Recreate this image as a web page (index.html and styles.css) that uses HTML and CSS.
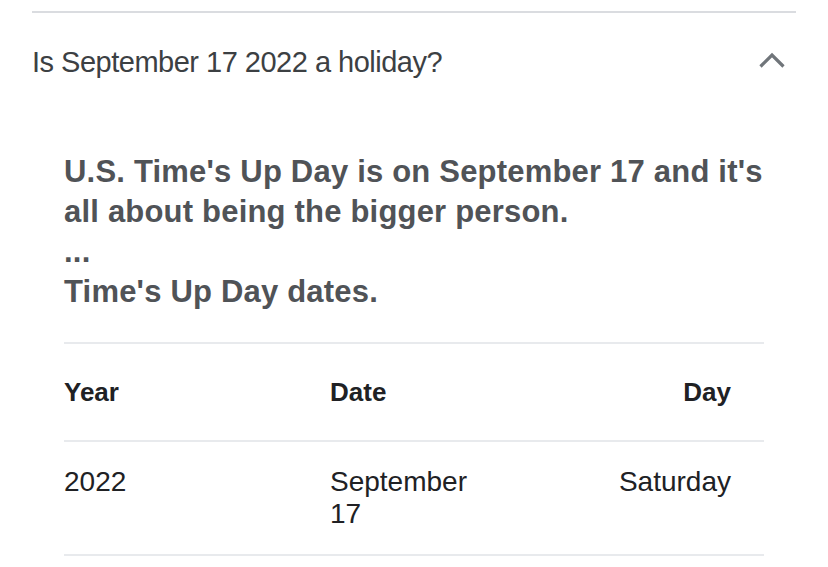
FILE: index.html
```html
<!DOCTYPE html>
<html lang="en">
<head>
<meta charset="utf-8">
<title>Is September 17 2022 a holiday?</title>
<link rel="stylesheet" href="styles.css">
</head>
<body>
<div class="faq">
  <div class="question-row">
    <div class="question">Is September 17 2022 a holiday?</div>
    <svg class="chevron" width="26" height="16" viewBox="0 0 26 16" aria-hidden="true">
      <path d="M1.5 14.5 L13 3 L24.5 14.5" fill="none" stroke="#70757a" stroke-width="3.2"/>
    </svg>
  </div>
  <div class="answer">
    <div class="snippet">U.S. Time's Up Day is on September 17 and it's all about being the bigger person.<br>...<br>Time's Up Day dates.</div>
    <div class="table">
      <div class="row head">
        <div class="cell">Year</div>
        <div class="cell">Date</div>
        <div class="cell right">Day</div>
      </div>
      <div class="row">
        <div class="cell">2022</div>
        <div class="cell">September 17</div>
        <div class="cell right">Saturday</div>
      </div>
    </div>
  </div>
</div>
</body>
</html>
```

FILE: styles.css
```css
html, body {
  margin: 0;
  padding: 0;
  background: #ffffff;
}

body {
  font-family: "Liberation Sans", Arial, sans-serif;
}

.faq {
  margin: 11px 32px 0 32px;
  border-top: 2px solid #dadce0;
}

.question-row {
  display: flex;
  justify-content: space-between;
  align-items: flex-start;
  padding-top: 33px;
}

.question {
  font-size: 29px;
  line-height: 32px;
  letter-spacing: -0.5px;
  color: #3c4043;
}

.chevron {
  display: block;
  margin-top: 6px;
  margin-right: 11px;
}

.answer {
  padding: 74px 32px 0 32px;
}

.snippet {
  font-size: 31px;
  line-height: 40px;
  font-weight: 700;
  letter-spacing: 0.2px;
  color: #505357;
}

.table {
  margin-top: 30px;
  border-top: 2px solid #e8eaed;
}

.row {
  display: grid;
  grid-template-columns: 266px 160px 1fr;
  border-bottom: 2px solid #e8eaed;
  padding: 24px 0;
  font-size: 28px;
  line-height: 32px;
  color: #202124;
}

.row.head {
  padding: 32px 0;
  font-size: 26px;
  font-weight: 700;
}

.cell.right {
  text-align: right;
  padding-right: 33px;
}
```
